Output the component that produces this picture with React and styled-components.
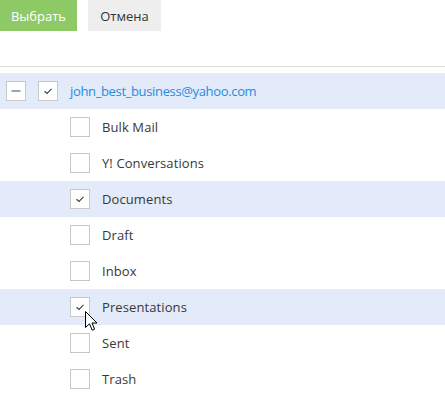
import React from "react";
import styled, { createGlobalStyle } from "styled-components";

const Global = createGlobalStyle`
  html, body { margin: 0; padding: 0; background: #fff; }
  body { font-family: "Open Sans", "Noto Sans", sans-serif; font-size: 13px; color: #333; }
`;

const Page = styled.div`
  position: relative;
  width: 445px;
  height: 400px;
  overflow: hidden;
`;

const Toolbar = styled.div`
  display: flex;
  gap: 11px;
  height: 31px;
`;

const Button = styled.button`
  height: 31px;
  border: none;
  margin: 0;
  padding: 0;
  font-family: inherit;
  font-size: 13px;
  background: ${(p) => (p.$primary ? "#8dc965" : "#eeeeee")};
  color: ${(p) => (p.$primary ? "#ffffff" : "#333333")};
  width: ${(p) => p.$w}px;
`;

const Separator = styled.div`
  margin-top: 35px;
  height: 1px;
  background: #dddddd;
`;

const List = styled.div`
  margin-top: 6px;
  display: flex;
  flex-direction: column;
`;

const Row = styled.div`
  display: flex;
  align-items: center;
  gap: 12px;
  height: 36px;
  padding-left: ${(p) => p.$indent}px;
  background: ${(p) => (p.$selected ? "#e3eaf9" : "transparent")};
`;

const Box = styled.span`
  box-sizing: border-box;
  width: 20px;
  height: 20px;
  border: 1px solid #c8c8c8;
  background: #fff;
  display: flex;
  align-items: center;
  justify-content: center;
  flex: none;
`;

const Label = styled.span`
  color: ${(p) => (p.$link ? "#1f8ee0" : "#383838")};
  line-height: 20px;
  letter-spacing: ${(p) => (p.$link ? "-0.35px" : "0.1px")};
`;

const Cursor = styled.svg`
  position: absolute;
  left: 85px;
  top: 311px;
`;

const Check = () => (
  <svg width="10" height="8" viewBox="0 0 10 8">
    <path d="M1.5 4.2 L4 6.5 L8.5 1.8" fill="none" stroke="#444" strokeWidth="1.2" />
  </svg>
);

const Minus = () => (
  <svg width="10" height="2" viewBox="0 0 10 2">
    <rect x="0.5" y="0.5" width="9" height="1" fill="#444" />
  </svg>
);

const folders = [
  { name: "Bulk Mail" },
  { name: "Y! Conversations" },
  { name: "Documents", checked: true },
  { name: "Draft" },
  { name: "Inbox" },
  { name: "Presentations", checked: true },
  { name: "Sent" },
  { name: "Trash" },
];

export default function App() {
  return (
    <Page>
      <Global />
      <Toolbar>
        <Button $primary $w={77}>Выбрать</Button>
        <Button $w={73}>Отмена</Button>
      </Toolbar>
      <Separator />
      <List>
        <Row $selected $indent={6}>
          <Box><Minus /></Box>
          <Box><Check /></Box>
          <Label $link>john_best_business@yahoo.com</Label>
        </Row>
        {folders.map((f) => (
          <Row key={f.name} $selected={f.checked} $indent={70}>
            <Box>{f.checked && <Check />}</Box>
            <Label>{f.name}</Label>
          </Row>
        ))}
      </List>
      <Cursor width="13" height="21" viewBox="0 0 13 21">
        <path
          d="M0.5 0.5 L0.5 16.5 L4.5 12.8 L7.2 19.2 L9.6 18.2 L7 12 L12 12 Z"
          fill="#fff"
          stroke="#000"
          strokeWidth="1"
          strokeLinejoin="miter"
        />
      </Cursor>
    </Page>
  );
}
